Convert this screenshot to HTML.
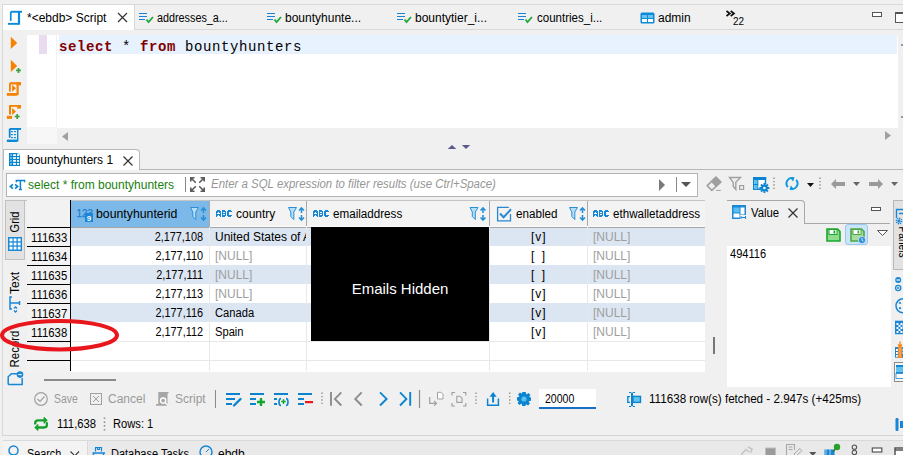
<!DOCTYPE html>
<html><head><meta charset="utf-8">
<style>
*{margin:0;padding:0;box-sizing:border-box}
html,body{width:903px;height:455px;overflow:hidden;background:#f0f0f0;font-family:"Liberation Sans",sans-serif;font-size:12px;color:#000}
.a{position:absolute}
.t{position:absolute;white-space:nowrap;line-height:14px}
svg{position:absolute;overflow:visible}
.g{color:#9e9e9e}
.r{text-align:right}
.sx{transform-origin:0 0}
.sr{transform-origin:100% 0}
</style></head><body>
<!-- ===== top tab bar ===== -->
<div class="a" style="left:2px;top:4px;width:901px;height:1px;background:#d9d9d9"></div>
<div class="a" style="left:2px;top:4px;width:1px;height:432px;background:#d9d9d9"></div>
<div class="a" style="left:3px;top:29px;width:900px;height:1px;background:#d9d9d9"></div>
<div class="a" style="left:3px;top:5px;width:131px;height:25px;background:#fff"></div>
<div class="a" style="left:134px;top:5px;width:1px;height:24px;background:#d9d9d9"></div>
<svg style="left:0;top:0" width="30" height="30"><g fill="#0a8ad8"><rect x="11" y="10.8" width="11" height="1.9"/><rect x="9.9" y="11.6" width="1.7" height="9.3"/><rect x="17.9" y="11.6" width="2.2" height="13"/><rect x="8" y="22.9" width="11" height="1.9"/></g></svg>
<div class="t" style="left:27px;top:11px">*&lt;ebdb&gt; Script</div>
<svg style="left:117px;top:12px" width="11" height="11"><path d="M1 1L10 10M10 1L1 10" stroke="#333" stroke-width="1.2"/></svg>

<svg style="left:139px;top:12px" width="16" height="12"><path d="M0 1.5H8M0 4.5H8M0 7.5H6" stroke="#1a82d4" stroke-width="1"/><path d="M7.5 7.5L9.5 10L14 5" fill="none" stroke="#1fa83a" stroke-width="1.8"/></svg>
<div class="t sx" style="left:157px;top:11px;transform:scaleX(.9)">addresses_a...</div>
<svg style="left:267px;top:12px" width="16" height="12"><path d="M0 1.5H8M0 4.5H8M0 7.5H6" stroke="#1a82d4" stroke-width="1"/><path d="M7.5 7.5L9.5 10L14 5" fill="none" stroke="#1fa83a" stroke-width="1.8"/></svg>
<div class="t" style="left:285px;top:11px">bountyhunte...</div>
<svg style="left:397px;top:12px" width="16" height="12"><path d="M0 1.5H8M0 4.5H8M0 7.5H6" stroke="#1a82d4" stroke-width="1"/><path d="M7.5 7.5L9.5 10L14 5" fill="none" stroke="#1fa83a" stroke-width="1.8"/></svg>
<div class="t" style="left:415px;top:11px">bountytier_i...</div>
<svg style="left:518px;top:12px" width="16" height="12"><path d="M0 1.5H8M0 4.5H8M0 7.5H6" stroke="#1a82d4" stroke-width="1"/><path d="M7.5 7.5L9.5 10L14 5" fill="none" stroke="#1fa83a" stroke-width="1.8"/></svg>
<div class="t sx" style="left:537px;top:11px;transform:scaleX(.96)">countries_i...</div>
<svg style="left:640px;top:12px" width="15" height="12"><rect x="0.5" y="0.5" width="14" height="11" rx="1.5" fill="#0a8ad8"/><rect x="2" y="3" width="5" height="3" fill="#6cc3f0"/><rect x="8" y="3" width="5" height="3" fill="#6cc3f0"/><rect x="2" y="7" width="5" height="3" fill="#fff"/><rect x="8" y="7" width="5" height="3" fill="#fff"/></svg>
<div class="t" style="left:658px;top:11px">admin</div>
<svg style="left:0;top:0" width="740" height="20"><path d="M726.5 11L729.8 13.5L726.5 16M730.7 11L734 13.5L730.7 16" fill="none" stroke="#111" stroke-width="1.7"/></svg>
<div class="t sx" style="left:733px;top:14px;font-size:11px;transform:scaleX(.9)">22</div>
<div class="a" style="left:872px;top:12px;width:10px;height:5px;border:1.5px solid #555;background:#fff"></div>
<div class="a" style="left:895px;top:12px;width:12px;height:10.5px;border:1.5px solid #555;border-top-width:2.5px;background:#fff"></div>

<!-- ===== editor ===== -->
<div class="a" style="left:27px;top:35px;width:871px;height:93px;background:#fff"></div>
<div class="a" style="left:56px;top:35px;width:1px;height:92px;background:#f2f2f2"></div>
<div class="a" style="left:39px;top:35px;width:8px;height:19px;background:#e8dcee"></div>
<div class="a" style="left:59px;top:35px;width:838px;height:19px;background:#e8f2fe"></div>
<div class="a" style="left:901px;top:44px;width:2px;height:2px;background:#999"></div><div class="a" style="left:901px;top:116px;width:2px;height:2px;background:#999"></div>
<div class="t" style="left:59px;top:40px;font-family:'Liberation Mono',monospace;font-size:14px;letter-spacing:0.6px;line-height:14px"><b style="color:#800000">select</b> * <b style="color:#800000">from</b> bountyhunters</div>
<div class="a" style="left:27px;top:127px;width:30px;height:17px;background:#f7f7f7"></div>
<svg style="left:62px;top:132px" width="8" height="9"><path d="M6 0V9L0 4.5Z" fill="#a0a0a0"/></svg>
<svg style="left:885px;top:131px" width="8" height="9"><path d="M0 0V9L6 4.5Z" fill="#a0a0a0"/></svg>
<!-- gutter icons -->
<svg style="left:0;top:0" width="27" height="145">
<path d="M10.8 36.7L17.2 42.9L10.8 49Z" fill="#f58200"/>
<path d="M10.8 59.7L17.2 65.9L10.8 72Z" fill="#f58200"/><path d="M16.1 70.4H20.9M18.5 67.9V72.9" stroke="#3d9f3d" stroke-width="1.7"/>
<g fill="#f58200"><rect x="9.7" y="82.2" width="11" height="2.3"/><rect x="18.5" y="82.2" width="2.4" height="3.2"/><rect x="9" y="83.3" width="1.8" height="8.3"/><rect x="16.5" y="82.2" width="2.2" height="13"/><rect x="6.9" y="93" width="10" height="2.8"/><path d="M12.1 84.8L16 88.3L12.1 91.8Z"/></g>
<g fill="#f58200"><rect x="9.7" y="105" width="11.2" height="1.8"/><rect x="17.2" y="105" width="3.7" height="3.6"/><rect x="9" y="105.3" width="2" height="9.2"/><rect x="6.9" y="115.8" width="5.2" height="3.1"/><path d="M12.1 107.9L16 111.5L12.1 115Z"/></g><path d="M14.7 116.5H19.7M17.2 114V119" stroke="#3d9f3d" stroke-width="1.7"/>
<g fill="#0a8ad8"><rect x="9.7" y="128" width="11.4" height="1.9"/><rect x="8.8" y="128.8" width="1.8" height="8.8"/><rect x="17" y="129.5" width="1.4" height="12"/><rect x="6.9" y="139.6" width="10.3" height="2.4"/><rect x="11" y="131" width="1.8" height="1.2"/><rect x="13.9" y="131" width="2" height="1.2"/><rect x="11" y="134" width="1.8" height="1.2"/><rect x="13.9" y="134" width="2" height="1.2"/><rect x="11" y="137" width="1.8" height="1.2"/><rect x="13.9" y="137" width="2" height="1.2"/></g>
</svg>
<svg style="left:447px;top:144px" width="26" height="6"><path d="M0.7 5L5 1L9.3 5Z" fill="#5a5a8c"/><path d="M14.9 1H23.2L19 5Z" fill="#5a5a8c"/></svg>

<!-- ===== results tab ===== -->
<div class="a" style="left:3px;top:169px;width:900px;height:1px;background:#b8b8b8"></div>
<div class="a" style="left:3px;top:149px;width:137px;height:21px;background:#fff;border:1px solid #b8b8b8;border-bottom:none;border-radius:0 4px 0 0"></div>
<svg style="left:0;top:0" width="30" height="170"><path d="M9 153H18L20 155V166H9Z" fill="#0a84d0"/><rect x="10" y="154.2" width="2" height="1.8" fill="#5ec4ee"/><rect x="13.1" y="154.2" width="2.8" height="1.8" fill="#fff"/><rect x="17" y="154.2" width="2.1" height="1.8" fill="#fff"/><rect x="10" y="157.1" width="2" height="1.8" fill="#5ec4ee"/><rect x="13.1" y="157.1" width="2.8" height="1.8" fill="#fff"/><rect x="17" y="157.1" width="2.1" height="1.8" fill="#fff"/><rect x="10" y="160.0" width="2" height="1.8" fill="#5ec4ee"/><rect x="13.1" y="160.0" width="2.8" height="1.8" fill="#fff"/><rect x="17" y="160.0" width="2.1" height="1.8" fill="#fff"/><rect x="10" y="163.0" width="2" height="1.8" fill="#5ec4ee"/><rect x="13.1" y="163.0" width="2.8" height="1.8" fill="#fff"/><rect x="17" y="163.0" width="2.1" height="1.8" fill="#fff"/><path d="M17.6 153.4L19.6 155.4" stroke="#fff" stroke-width="0.8"/></svg>
<div class="t" style="left:27px;top:153px">bountyhunters 1</div>
<svg style="left:123px;top:156px" width="10" height="10"><path d="M0.5 0.5L9.5 9.5M9.5 0.5L0.5 9.5" stroke="#333" stroke-width="1.2"/></svg>

<!-- ===== filter bar ===== -->
<div class="a" style="left:6px;top:173px;width:692px;height:24px;background:#fff;border:1px solid #b4b4b4"></div>
<svg style="left:0;top:0" width="30" height="195"><path d="M12.9 184.3L10.4 186.5L12.9 188.7M15.1 184.3L17.6 186.5L15.1 188.7" fill="none" stroke="#0a84d0" stroke-width="1.7"/><path d="M16.4 182.2V180.6H24.6V182.2M20.4 180.6V189.5M18.9 189.5H21.9" fill="none" stroke="#0a84d0" stroke-width="1.5"/></svg>
<div class="t" style="left:28px;top:178px;color:#208010">select * from bountyhunters</div>
<div class="a" style="left:185px;top:177px;width:1px;height:15px;background:#888"></div>
<svg style="left:190px;top:177px" width="16" height="16"><path d="M0.8 4.5V0.8H4.5M0.8 0.8L5.8 5.8M14.2 4.5V0.8H10.5M14.2 0.8L9.2 5.8M0.8 10.5V14.2H4.5M0.8 14.2L5.8 9.2M14.2 10.5V14.2H10.5M14.2 14.2L9.2 9.2" fill="none" stroke="#5c5c5c" stroke-width="1.6"/></svg>
<div class="t sx" style="left:211px;top:177px;color:#969696;font-style:italic;transform:scaleX(.953)">Enter a SQL expression to filter results (use Ctrl+Space)</div>
<svg style="left:659px;top:179px" width="8" height="13"><path d="M0 0L6 6L0 12Z" fill="#7a7a7a"/></svg>
<div class="a" style="left:676px;top:177px;width:1px;height:15px;background:#8a8a8a"></div>
<svg style="left:681px;top:182px" width="11" height="6"><path d="M0 0H10L5 5Z" fill="#555"/></svg>
<!-- toolbar right -->
<svg style="left:700px;top:170px" width="203" height="27">
<g transform="translate(-700,-170)">
<path d="M716 177.2L720.8 182L711.8 190.4L707.2 185.7Z" fill="none" stroke="#a0a0a0" stroke-width="1.6" stroke-linejoin="round"/><path d="M716 177.2L720.8 182L716.2 186.4L711.5 181.6Z" fill="#a0a0a0" stroke="#a0a0a0" stroke-width="1.2" stroke-linejoin="round"/><path d="M716.2 190.4H720.8" stroke="#a0a0a0" stroke-width="1"/>
<path d="M729.5 177.5H740.5L735.8 182.2V189.5L733.2 186.3V182.2Z" fill="none" stroke="#a0a0a0" stroke-width="1.4"/><rect x="739.6" y="185.6" width="4" height="3.8" fill="none" stroke="#a0a0a0" stroke-width="1.2"/>
<rect x="753.7" y="177.7" width="11.8" height="11.6" fill="#fff" stroke="#0a84d0" stroke-width="1.4"/><rect x="753" y="177" width="13.1" height="3" fill="#0a84d0"/><rect x="754.4" y="180" width="3.2" height="9.2" fill="#5cc0ee"/><path d="M757.8 180V189M754 184.5H757.8" stroke="#0a84d0" stroke-width="1"/>
<g transform="translate(764.4,188)"><circle r="3.6" fill="#0a84d0" stroke="#f0f0f0" stroke-width="0.6"/><path d="M0 -5V5M-5 0H5M-3.5 -3.5L3.5 3.5M3.5 -3.5L-3.5 3.5" stroke="#0a84d0" stroke-width="1.8"/><circle r="1.3" fill="#fff"/></g>
<g transform="translate(792,183.5) rotate(-40)"><path d="M-5.5 0A5.5 5.5 0 0 1 4.5 -3.2M5.5 0A5.5 5.5 0 0 1 -4.5 3.2" fill="none" stroke="#0a96e0" stroke-width="1.9"/><path d="M2.2 -5.8L6 -3.3L2.2 -0.8Z" fill="#0a96e0"/><path d="M-2.2 5.8L-6 3.3L-2.2 0.8Z" fill="#0a96e0"/></g>
</g>
<path d="M74 7.5V21" stroke="#9a8f80" stroke-width="1.4" stroke-dasharray="1.4 2"/>
<path d="M107 13H114L110.5 17Z" fill="#111"/>
<path d="M120 7.5V21" stroke="#9a8f80" stroke-width="1.4" stroke-dasharray="1.4 2"/>
<path d="M131 14L136 9V12H145V16H136V19Z" fill="#9a9a9a"/>
<path d="M153 12H160L156.5 16Z" fill="#666"/>
<path d="M183 14L178 9V12H169V16H178V19Z" fill="#9a9a9a"/>
<path d="M191 12H198L194.5 16Z" fill="#666"/>
</svg>

<!-- ===== grid ===== -->
<div class="a" style="left:27px;top:200px;width:678px;height:172px;background:#fff"></div>
<div class="a" style="left:25px;top:200px;width:680px;height:1px;background:#c4c4c4"></div>
<div class="a" style="left:27px;top:200px;width:44px;height:172px;background:#f2f2f2"></div>
<!-- header -->
<div class="a" style="left:71px;top:201px;width:139px;height:26px;background:#7cb9e8"></div>
<div class="a" style="left:210px;top:201px;width:495px;height:26px;background:#f3f3f3"></div>
<div class="a" style="left:209px;top:201px;width:1px;height:26px;background:#a8a8a8"></div><div class="a" style="left:306px;top:201px;width:1px;height:26px;background:#a8a8a8"></div>
<div class="a" style="left:489px;top:201px;width:1px;height:26px;background:#a8a8a8"></div>
<div class="a" style="left:587px;top:201px;width:1px;height:26px;background:#a8a8a8"></div>
<!-- data rows bg -->
<div class="a" style="left:71px;top:228px;width:634px;height:18px;background:#dce6f2"></div><div class="a" style="left:210px;top:226px;width:495px;height:1px;background:#fbfbfb"></div><div class="a" style="left:71px;top:227px;width:634px;height:1px;background:#a6a6a6"></div>
<div class="a" style="left:71px;top:265px;width:634px;height:19px;background:#dce6f2"></div>
<div class="a" style="left:71px;top:303px;width:634px;height:19px;background:#dce6f2"></div>
<!-- col lines in body -->
<div class="a" style="left:209px;top:227px;width:1px;height:144px;background:#e8e8e8"></div>
<div class="a" style="left:306px;top:227px;width:1px;height:144px;background:#e8e8e8"></div>
<div class="a" style="left:489px;top:227px;width:1px;height:144px;background:#e8e8e8"></div>
<div class="a" style="left:587px;top:227px;width:1px;height:144px;background:#e8e8e8"></div>
<div class="a" style="left:72px;top:341px;width:633px;height:1px;background:#e8e8e8"></div>
<div class="a" style="left:72px;top:360px;width:633px;height:1px;background:#e8e8e8"></div>
<!-- row number lines -->
<div class="a" style="left:70px;top:200px;width:1px;height:171px;background:#000"></div>
<div class="a" style="left:27px;top:227px;width:43px;height:1px;background:#000"></div>
<div class="a" style="left:27px;top:246px;width:43px;height:1px;background:#000"></div>
<div class="a" style="left:27px;top:265px;width:43px;height:1px;background:#000"></div>
<div class="a" style="left:27px;top:284px;width:43px;height:1px;background:#000"></div>
<div class="a" style="left:27px;top:303px;width:43px;height:1px;background:#000"></div>
<div class="a" style="left:27px;top:322px;width:43px;height:1px;background:#000"></div>
<div class="a" style="left:27px;top:341px;width:43px;height:1px;background:#000"></div>
<div class="a" style="left:27px;top:360px;width:43px;height:1px;background:#000"></div>
<!-- header texts -->
<svg style="left:76px;top:205px" width="18" height="18"><text x="0.5" y="12" font-family="Liberation Sans" font-size="10.5" fill="#1a7fd0" stroke="#1a7fd0" stroke-width="0.25" textLength="16.5" lengthAdjust="spacingAndGlyphs">123</text><rect x="9" y="8" width="8" height="9" fill="#1a86d6"/><text x="10.8" y="15.5" font-family="Liberation Sans" font-weight="bold" font-size="8" fill="#fff">9</text></svg>
<div class="t sx" style="left:96px;top:207px;transform:scaleX(1.025)">bountyhunterid</div>
<div class="t" style="left:236px;top:207px">country</div>
<div class="t sx" style="left:333px;top:207px;transform:scaleX(.97)">emailaddress</div>
<div class="t sx" style="left:516px;top:207px;transform:scaleX(.97)">enabled</div>
<div class="t sx" style="left:613px;top:207px;transform:scaleX(.967)">ethwalletaddress</div>
<svg style="left:0;top:200px" width="705" height="27">
<path d="M217 10h1v1h-1zM218 10h1v1h-1zM219 10h1v1h-1zM216 11h1v1h-1zM217 11h1v1h-1zM218 11h1v1h-1zM219 11h1v1h-1zM220 11h1v1h-1zM216 12h1v1h-1zM217 12h1v1h-1zM219 12h1v1h-1zM220 12h1v1h-1zM216 13h1v1h-1zM220 13h1v1h-1zM216 14h1v1h-1zM217 14h1v1h-1zM218 14h1v1h-1zM219 14h1v1h-1zM220 14h1v1h-1zM216 15h1v1h-1zM217 15h1v1h-1zM219 15h1v1h-1zM220 15h1v1h-1zM216 16h1v1h-1zM220 16h1v1h-1zM222 10h1v1h-1zM223 10h1v1h-1zM224 10h1v1h-1zM222 11h1v1h-1zM223 11h1v1h-1zM224 11h1v1h-1zM225 11h1v1h-1zM222 12h1v1h-1zM225 12h1v1h-1zM222 13h1v1h-1zM223 13h1v1h-1zM224 13h1v1h-1zM225 13h1v1h-1zM222 14h1v1h-1zM225 14h1v1h-1zM222 15h1v1h-1zM223 15h1v1h-1zM224 15h1v1h-1zM225 15h1v1h-1zM222 16h1v1h-1zM223 16h1v1h-1zM224 16h1v1h-1zM228 10h1v1h-1zM229 10h1v1h-1zM230 10h1v1h-1zM227 11h1v1h-1zM228 11h1v1h-1zM229 11h1v1h-1zM230 11h1v1h-1zM231 11h1v1h-1zM227 12h1v1h-1zM228 12h1v1h-1zM227 13h1v1h-1zM228 13h1v1h-1zM227 14h1v1h-1zM228 14h1v1h-1zM227 15h1v1h-1zM228 15h1v1h-1zM229 15h1v1h-1zM230 15h1v1h-1zM231 15h1v1h-1zM228 16h1v1h-1zM229 16h1v1h-1zM230 16h1v1h-1zM314 10h1v1h-1zM315 10h1v1h-1zM316 10h1v1h-1zM313 11h1v1h-1zM314 11h1v1h-1zM315 11h1v1h-1zM316 11h1v1h-1zM317 11h1v1h-1zM313 12h1v1h-1zM314 12h1v1h-1zM316 12h1v1h-1zM317 12h1v1h-1zM313 13h1v1h-1zM317 13h1v1h-1zM313 14h1v1h-1zM314 14h1v1h-1zM315 14h1v1h-1zM316 14h1v1h-1zM317 14h1v1h-1zM313 15h1v1h-1zM314 15h1v1h-1zM316 15h1v1h-1zM317 15h1v1h-1zM313 16h1v1h-1zM317 16h1v1h-1zM319 10h1v1h-1zM320 10h1v1h-1zM321 10h1v1h-1zM319 11h1v1h-1zM320 11h1v1h-1zM321 11h1v1h-1zM322 11h1v1h-1zM319 12h1v1h-1zM322 12h1v1h-1zM319 13h1v1h-1zM320 13h1v1h-1zM321 13h1v1h-1zM322 13h1v1h-1zM319 14h1v1h-1zM322 14h1v1h-1zM319 15h1v1h-1zM320 15h1v1h-1zM321 15h1v1h-1zM322 15h1v1h-1zM319 16h1v1h-1zM320 16h1v1h-1zM321 16h1v1h-1zM325 10h1v1h-1zM326 10h1v1h-1zM327 10h1v1h-1zM324 11h1v1h-1zM325 11h1v1h-1zM326 11h1v1h-1zM327 11h1v1h-1zM328 11h1v1h-1zM324 12h1v1h-1zM325 12h1v1h-1zM324 13h1v1h-1zM325 13h1v1h-1zM324 14h1v1h-1zM325 14h1v1h-1zM324 15h1v1h-1zM325 15h1v1h-1zM326 15h1v1h-1zM327 15h1v1h-1zM328 15h1v1h-1zM325 16h1v1h-1zM326 16h1v1h-1zM327 16h1v1h-1zM594 10h1v1h-1zM595 10h1v1h-1zM596 10h1v1h-1zM593 11h1v1h-1zM594 11h1v1h-1zM595 11h1v1h-1zM596 11h1v1h-1zM597 11h1v1h-1zM593 12h1v1h-1zM594 12h1v1h-1zM596 12h1v1h-1zM597 12h1v1h-1zM593 13h1v1h-1zM597 13h1v1h-1zM593 14h1v1h-1zM594 14h1v1h-1zM595 14h1v1h-1zM596 14h1v1h-1zM597 14h1v1h-1zM593 15h1v1h-1zM594 15h1v1h-1zM596 15h1v1h-1zM597 15h1v1h-1zM593 16h1v1h-1zM597 16h1v1h-1zM599 10h1v1h-1zM600 10h1v1h-1zM601 10h1v1h-1zM599 11h1v1h-1zM600 11h1v1h-1zM601 11h1v1h-1zM602 11h1v1h-1zM599 12h1v1h-1zM602 12h1v1h-1zM599 13h1v1h-1zM600 13h1v1h-1zM601 13h1v1h-1zM602 13h1v1h-1zM599 14h1v1h-1zM602 14h1v1h-1zM599 15h1v1h-1zM600 15h1v1h-1zM601 15h1v1h-1zM602 15h1v1h-1zM599 16h1v1h-1zM600 16h1v1h-1zM601 16h1v1h-1zM605 10h1v1h-1zM606 10h1v1h-1zM607 10h1v1h-1zM604 11h1v1h-1zM605 11h1v1h-1zM606 11h1v1h-1zM607 11h1v1h-1zM608 11h1v1h-1zM604 12h1v1h-1zM605 12h1v1h-1zM604 13h1v1h-1zM605 13h1v1h-1zM604 14h1v1h-1zM605 14h1v1h-1zM604 15h1v1h-1zM605 15h1v1h-1zM606 15h1v1h-1zM607 15h1v1h-1zM608 15h1v1h-1zM605 16h1v1h-1zM606 16h1v1h-1zM607 16h1v1h-1z" fill="#1a86d6"/>
<path d="M508.8 7.3H497.6V20.8H510.5V14" fill="none" stroke="#2b88d0" stroke-width="1.3"/><path d="M500 13.5L503.6 17.2L511 9.3" fill="none" stroke="#2b88d0" stroke-width="2"/>
<g transform="translate(190,7)"><path d="M0.5 0.5H8.5L5.8 5V12.5L2.8 9.5V5Z" fill="#b6def6" stroke="#2b8fd6" stroke-width="1"/><path d="M13.5 1V6M13.5 8V13M11 3.5L13.5 1L16 3.5M11 10.5L13.5 13L16 10.5" fill="none" stroke="#2b8fd6" stroke-width="1.6"/></g><g transform="translate(288,7)"><path d="M0.5 0.5H8.5L5.8 5V12.5L2.8 9.5V5Z" fill="#b6def6" stroke="#2b8fd6" stroke-width="1"/><path d="M13.5 1V6M13.5 8V13M11 3.5L13.5 1L16 3.5M11 10.5L13.5 13L16 10.5" fill="none" stroke="#2b8fd6" stroke-width="1.6"/></g><g transform="translate(469.5,7)"><path d="M0.5 0.5H8.5L5.8 5V12.5L2.8 9.5V5Z" fill="#b6def6" stroke="#2b8fd6" stroke-width="1"/><path d="M13.5 1V6M13.5 8V13M11 3.5L13.5 1L16 3.5M11 10.5L13.5 13L16 10.5" fill="none" stroke="#2b8fd6" stroke-width="1.6"/></g><g transform="translate(569,7)"><path d="M0.5 0.5H8.5L5.8 5V12.5L2.8 9.5V5Z" fill="#b6def6" stroke="#2b8fd6" stroke-width="1"/><path d="M13.5 1V6M13.5 8V13M11 3.5L13.5 1L16 3.5M11 10.5L13.5 13L16 10.5" fill="none" stroke="#2b8fd6" stroke-width="1.6"/></g>
</svg>
<!-- row data -->
<div class="t sx" style="left:31px;top:231px;transform:scaleX(.946)">111633</div>
<div class="t sx" style="left:31px;top:250px;transform:scaleX(.946)">111634</div>
<div class="t sx" style="left:31px;top:269px;transform:scaleX(.946)">111635</div>
<div class="t sx" style="left:31px;top:288px;transform:scaleX(.946)">111636</div>
<div class="t sx" style="left:31px;top:307px;transform:scaleX(.946)">111637</div>
<div class="t sx" style="left:31px;top:326px;transform:scaleX(.946)">111638</div>
<div class="t r sr" style="left:100px;width:103px;top:230px;transform:scaleX(.906)">2,177,108</div>
<div class="t r sr" style="left:100px;width:103px;top:249px;transform:scaleX(.906)">2,177,110</div>
<div class="t r sr" style="left:100px;width:103px;top:268px;transform:scaleX(.906)">2,177,111</div>
<div class="t r sr" style="left:100px;width:103px;top:287px;transform:scaleX(.906)">2,177,113</div>
<div class="t r sr" style="left:100px;width:103px;top:306px;transform:scaleX(.906)">2,177,116</div>
<div class="t r sr" style="left:100px;width:103px;top:325px;transform:scaleX(.906)">2,177,112</div>
<div class="t" style="left:215px;top:230px;width:91px;overflow:hidden">United States of America</div>
<div class="t g" style="left:215px;top:249px">[NULL]</div>
<div class="t g" style="left:215px;top:268px">[NULL]</div>
<div class="t g" style="left:215px;top:287px">[NULL]</div>
<div class="t sx" style="left:215px;top:306px;transform:scaleX(.93)">Canada</div>
<div class="t sx" style="left:215px;top:325px;transform:scaleX(.93)">Spain</div>
<div class="t" style="left:531px;top:230px;letter-spacing:1px">[v]</div>
<div class="t" style="left:531px;top:249px;word-spacing:4px">[ ]</div>
<div class="t" style="left:531px;top:268px;word-spacing:4px">[ ]</div>
<div class="t" style="left:531px;top:287px;letter-spacing:1px">[v]</div>
<div class="t" style="left:531px;top:306px;letter-spacing:1px">[v]</div>
<div class="t" style="left:531px;top:325px;letter-spacing:1px">[v]</div>
<div class="t g" style="left:593px;top:230px">[NULL]</div>
<div class="t g" style="left:593px;top:249px">[NULL]</div>
<div class="t g" style="left:593px;top:268px">[NULL]</div>
<div class="t g" style="left:593px;top:287px">[NULL]</div>
<div class="t g" style="left:593px;top:306px">[NULL]</div>
<div class="t g" style="left:593px;top:325px">[NULL]</div>
<!-- emails hidden box -->
<div class="a" style="left:311px;top:227px;width:178px;height:114px;background:#000"></div>
<div class="t" style="left:311px;width:178px;text-align:center;top:281px;color:#fff;font-size:15px;line-height:16px">Emails Hidden</div>

<!-- vertical tabs -->
<div class="a" style="left:5px;top:200px;width:20px;height:60px;background:#e2e2e2;border:1px solid #c0c0c0"></div>
<div class="t" style="left:14.5px;top:221.5px;transform:translate(-50%,-50%) rotate(-90deg) scaleX(.92)">Grid</div>
<svg style="left:8px;top:237px" width="15" height="15"><rect x="0" y="0" width="14" height="14" fill="#1a8ad8"/><g fill="#fff"><rect x="1.5" y="1.5" width="3" height="2.8"/><rect x="5.7" y="1.5" width="2.8" height="2.8"/><rect x="9.8" y="1.5" width="2.8" height="2.8"/><rect x="1.5" y="5.6" width="3" height="2.8"/><rect x="5.7" y="5.6" width="2.8" height="2.8"/><rect x="9.8" y="5.6" width="2.8" height="2.8"/><rect x="1.5" y="9.7" width="3" height="2.8"/><rect x="5.7" y="9.7" width="2.8" height="2.8"/><rect x="9.8" y="9.7" width="2.8" height="2.8"/></g></svg>
<div class="t" style="left:14.5px;top:282.5px;transform:translate(-50%,-50%) rotate(-90deg)">Text</div>
<svg style="left:8px;top:296px" width="15" height="18"><path d="M4 1H2V13H4M2.5 7H12M11.5 5V9" fill="none" stroke="#1a86d6" stroke-width="1.5"/><path d="M6 12.5L7.5 11L9 12.5M6 14.5L7.5 16L9 14.5" fill="none" stroke="#1a86d6" stroke-width="1.3"/></svg>
<div class="t" style="left:14.5px;top:349px;transform:translate(-50%,-50%) rotate(-90deg) scaleX(.95)">Record</div>
<svg style="left:7px;top:371px" width="17" height="15"><path d="M1.2 13.6V5.8L4.5 2.8H10M15.2 7V13.6H1.2" fill="none" stroke="#1a86d6" stroke-width="1.5"/><circle cx="13" cy="3.6" r="3.3" fill="#1a86d6"/><path d="M11.3 3.6H14.7" stroke="#fff" stroke-width="1.1"/></svg>

<!-- red ellipse -->
<svg style="left:0;top:0" width="130" height="360"><ellipse cx="59.5" cy="335.2" rx="57.5" ry="14.3" fill="none" stroke="#e8171e" stroke-width="4"/></svg>

<!-- grid scrollbars -->
<div class="a" style="left:44px;top:379px;width:72px;height:2px;background:#8a8a8a"></div>
<div class="a" style="left:713px;top:337px;width:2px;height:17px;background:#777"></div>

<!-- ===== value panel ===== -->
<div class="a" style="left:804px;top:223px;width:86px;height:1px;background:#a8a8a8"></div>
<div class="a" style="left:727px;top:200px;width:78px;height:24px;border-top:1px solid #a8a8a8;border-right:1px solid #a8a8a8;border-radius:0 4px 0 0"></div>
<svg style="left:732px;top:205px" width="15" height="15"><rect x="0" y="0" width="14" height="14" fill="#1a8ad8"/><rect x="1.5" y="2.5" width="6" height="5" fill="#5cbdee"/><rect x="1.5" y="8.5" width="6" height="4" fill="#fff"/><rect x="8.5" y="2.5" width="4" height="7" fill="#fff"/><rect x="8" y="10" width="6" height="4" fill="#f0f0f0"/><path d="M9 11V14M13.5 11V14M9 12.5H13.5" stroke="#1a8ad8" stroke-width="1"/></svg>
<div class="t sx" style="left:751px;top:206px;transform:scaleX(.94)">Value</div>
<svg style="left:788px;top:208px" width="10" height="10"><path d="M0.5 0.5L9.5 9.5M9.5 0.5L0.5 9.5" stroke="#333" stroke-width="1.2"/></svg>
<div class="a" style="left:871px;top:207px;width:10px;height:4px;border:1.2px solid #555;background:#fff"></div>
<svg style="left:826px;top:228px" width="16" height="16"><path d="M1 1H11.5L14 3.5V13H1Z" fill="#8fdc8f" stroke="#1aa82c" stroke-width="1.6"/><rect x="3" y="1.5" width="8" height="5" fill="#fff" stroke="#1aa82c" stroke-width="1"/><rect x="7.5" y="2.5" width="1.8" height="3" fill="#1aa82c"/></svg>
<div class="a" style="left:845px;top:224px;width:23px;height:21px;background:#cce4f7;border:1px solid #99c9ef;border-radius:3px"></div>
<svg style="left:850px;top:228px" width="18" height="17"><path d="M1 1H11.5L14 3.5V13H1Z" fill="#a8dc98" stroke="#4aa84a" stroke-width="1.6"/><rect x="3" y="1.5" width="8" height="5" fill="#fff" stroke="#4aa84a" stroke-width="1"/><rect x="7.5" y="2.5" width="1.8" height="3" fill="#4aa84a"/><circle cx="12" cy="12" r="3.6" fill="#2f8fd8" stroke="#cce4f7" stroke-width="0.8"/><path d="M12 10V12.3L13.3 13" stroke="#fff" stroke-width="0.8" fill="none"/></svg>
<svg style="left:877px;top:230px" width="12" height="8"><path d="M0.5 0.5H10.5L5.5 5.5Z" fill="#fff" stroke="#555"/></svg>
<div class="a" style="left:727px;top:246px;width:164px;height:141px;background:#fff"></div>
<div class="t sx" style="left:730px;top:247px;transform:scaleX(.92)">494116</div>
<!-- right panels strip -->
<div class="a" style="left:893px;top:200px;width:12px;height:70px;background:#e2e2e2;border:1px solid #b8b8b8"></div>
<div class="t" style="left:903px;top:242px;transform:translate(-50%,-50%) rotate(90deg) scaleX(.85)">Panels</div>
<svg style="left:896px;top:209px" width="9" height="16"><path d="M0.5 9V0.5H9M3 4.5H9" fill="none" stroke="#1a86d6" stroke-width="1.4"/><circle cx="3" cy="12" r="2.6" fill="none" stroke="#1a86d6" stroke-width="1.6" stroke-dasharray="1.2 0.8"/><circle cx="3" cy="12" r="1.5" fill="#1a86d6"/></svg>
<svg style="left:0;top:0" width="903" height="390">
<circle cx="898.2" cy="280" r="3" fill="#1a86d6"/><path d="M896.5 280H900" stroke="#fff" stroke-width="1.2"/>
<circle cx="898.2" cy="288" r="2.6" fill="#fff" stroke="#1a86d6" stroke-width="1.3"/><path d="M896.8 286.6L899.6 289.4M899.6 286.6L896.8 289.4" stroke="#1a86d6" stroke-width="1"/>
<circle cx="903" cy="305.8" r="7" fill="none" stroke="#1a86d6" stroke-width="1.5"/><circle cx="900" cy="303" r="1.1" fill="#1a86d6"/><circle cx="900" cy="308.2" r="1.1" fill="#1a86d6"/>
<rect x="895" y="320.7" width="9" height="13.5" fill="#1a86d6"/><g fill="#fff"><rect x="896.5" y="323" width="2" height="2"/><rect x="900.5" y="323" width="2" height="2"/><rect x="898.5" y="325" width="2" height="2"/><rect x="902.5" y="325" width="2" height="2"/><rect x="896.5" y="327" width="2" height="2"/><rect x="900.5" y="327" width="2" height="2"/><rect x="898.5" y="329" width="2" height="2"/><rect x="896.5" y="331" width="2" height="2"/><rect x="900.5" y="331" width="2" height="2"/></g>
<path d="M900 341.5V346.5M898 344.5L900 346.5L902 344.5" fill="none" stroke="#f5820f" stroke-width="1.3"/>
<rect x="895" y="347" width="9" height="10.6" fill="#1a86d6"/><g fill="#fff"><rect x="896" y="349" width="2" height="2"/><rect x="896" y="352" width="2" height="2"/><rect x="896" y="355" width="2" height="1.8"/></g><rect x="898.2" y="347" width="3.6" height="10.6" fill="#f5a050" stroke="#f5820f" stroke-width="0.8"/><rect x="902.5" y="349" width="2" height="2" fill="#fff"/><rect x="902.5" y="352" width="2" height="2" fill="#fff"/>
<rect x="894.5" y="362.5" width="10" height="19" fill="#f7f7f7" stroke="#8c8c8c"/><rect x="896" y="365" width="8" height="2" fill="#1a86d6"/><rect x="896" y="367" width="8" height="5" fill="#5ec4ee"/><rect x="896" y="372" width="8" height="1.5" fill="#1a86d6"/><rect x="896" y="373.5" width="8" height="5" fill="#fff" stroke="#1a86d6" stroke-width="0.8"/>
</svg>

<!-- ===== bottom toolbar ===== -->
<svg style="left:34px;top:392px" width="15" height="15"><circle cx="7" cy="7" r="6.3" fill="none" stroke="#a0a0a0" stroke-width="1.2"/><path d="M3.5 7L6 9.5L10.5 4.5" fill="none" stroke="#a0a0a0" stroke-width="1.2"/></svg>
<div class="t sx" style="left:54px;top:392px;color:#999;transform:scaleX(.865)">Save</div>
<svg style="left:90px;top:393px" width="13" height="13"><rect x="0.5" y="0.5" width="11" height="11" fill="none" stroke="#a0a0a0"/><path d="M3 3L9 9M9 3L3 9" stroke="#a0a0a0"/></svg>
<div class="t" style="left:108px;top:392px;color:#999">Cancel</div>
<svg style="left:0;top:0" width="180" height="410"><path d="M158.3 392.1H169L167.5 394V404H167V405.7H156V404H158.3Z" fill="#a6a6a6"/><circle cx="163.1" cy="400.6" r="2.6" fill="#a6a6a6" stroke="#fff" stroke-width="1.4"/><path d="M165 402.5L167 404.5" stroke="#fff" stroke-width="1.4"/></svg>
<div class="t" style="left:175px;top:392px;color:#999">Script</div>
<div class="a" style="left:215px;top:390px;width:1px;height:18px;background:#8a8a8a"></div>
<svg style="left:0;top:0" width="540" height="412">
<g fill="#0a84d0">
<rect x="226" y="393" width="14" height="2"/><rect x="226" y="398" width="9" height="2"/><rect x="226" y="403" width="6" height="2"/>
<rect x="250" y="393" width="14" height="2"/><rect x="250" y="398" width="6" height="2"/><rect x="250" y="403" width="6" height="2"/>
<rect x="274" y="393" width="14" height="2"/><rect x="274" y="398" width="3" height="2"/><rect x="274" y="403" width="3" height="2"/>
<rect x="298" y="393" width="14" height="2"/><rect x="298" y="398" width="6" height="2"/><rect x="298" y="403" width="6" height="2"/>
</g>
<path d="M234 405.5L240.5 399" stroke="#0a84d0" stroke-width="2.4" stroke-linecap="round"/>
<path d="M257 402H265M261 398V406" stroke="#10a830" stroke-width="2.4"/>
<path d="M281 398.5Q279 398.5 279 402T281 405.5M286 398.5Q288 398.5 288 402T286 405.5" fill="none" stroke="#0a84d0" stroke-width="1.6"/>
<path d="M281.2 401.6H285.8M283.5 399.3V403.9" stroke="#10a830" stroke-width="1.5"/>
<rect x="305" y="401" width="8" height="2.2" fill="#f01818"/>
<path d="M322 392.5V406" stroke="#9a8f80" stroke-width="1.4" stroke-dasharray="1.4 2"/>
<g fill="none" stroke-width="1.9">
<path d="M331 392V405.7M341.3 392.4L334.9 398.9L341.3 405.5" stroke="#8c8c8c"/>
<path d="M361.7 392.4L355.3 398.9L361.7 405.5" stroke="#8c8c8c"/>
<path d="M380 392.4L386.6 398.9L380 405.5" stroke="#0a84d0"/>
<path d="M400 392.4L406.4 398.9L400 405.5M410.2 392V405.7" stroke="#0a84d0"/>
</g>
<path d="M419.5 390V408" stroke="#8a8a8a" stroke-width="1.2"/>
<path d="M429.7 397V403.3H436.5M434 400.8L436.5 403.3L434 405.8" fill="none" stroke="#a0a0a0" stroke-width="1.2"/><path d="M437.5 392.3H441L443 394.3V399H437.5Z" fill="#fff" stroke="#a0a0a0" stroke-width="1"/>
<path d="M452 395.5V392.5H455M463 392.5H465.8V395.5M452 403V406H455M463 406H465.8V403" fill="none" stroke="#a0a0a0" stroke-width="1.2"/><path d="M456.8 396.2H460L462 398.2V402.4H456.8Z" fill="none" stroke="#a0a0a0" stroke-width="1.1"/>
<path d="M476 392.5V406" stroke="#9a8f80" stroke-width="1.4" stroke-dasharray="1.4 2"/>
<path d="M487.6 398.5V405.3H498.4V398.5" fill="none" stroke="#0a84d0" stroke-width="1.5"/><path d="M493.1 396V402.5" stroke="#0a84d0" stroke-width="2"/><path d="M489.6 396.8L493.1 392L496.6 396.8Z" fill="#0a84d0"/>
<path d="M509.7 392.5V406" stroke="#9a8f80" stroke-width="1.4" stroke-dasharray="1.4 2"/>
<g transform="translate(524,399)"><path d="M-1.8 -7H1.8L2.3 -4.6L4.6 -5.9L6.4 -4.1L5.2 -1.9L7 -1.4V1.8L4.6 2.3L5.9 4.6L4.1 6.4L1.9 5.2L1.4 7H-1.8L-2.3 4.6L-4.6 5.9L-6.4 4.1L-5.2 1.9L-7 1.4V-1.8L-4.6 -2.3L-5.9 -4.6L-4.1 -6.4L-1.9 -5.2Z" fill="#0a84d0"/><circle r="2.6" fill="#5cc0ee"/></g>
</svg>
<div class="a" style="left:539px;top:389px;width:57px;height:20px;background:#fff;border-bottom:2px solid #1a6fc4"></div>
<div class="t sx" style="left:545px;top:392px;transform:scaleX(.88)">20000</div>
<svg style="left:0;top:0" width="650" height="410"><rect x="632.9" y="396.4" width="7.6" height="6" fill="#5ec4ee" stroke="#0a84d0" stroke-width="1.4"/><path d="M630 396.6H627.8V402.4H630" fill="none" stroke="#0a84d0" stroke-width="1.4"/><rect x="631" y="392.6" width="2" height="13.6" fill="#0a84d0"/><path d="M629 392.5H631M633 392.5H635M629 406.5H631M633 406.5H635" stroke="#0a84d0" stroke-width="1"/></svg>
<div class="t sx" style="left:649px;top:392px;transform:scaleX(.97)">111638 row(s) fetched - 2.947s (+425ms)</div>
<svg style="left:0;top:0" width="60" height="440"><path d="M35.2 424.6V423Q35.2 420.3 38 420.3H44.5M46.9 422.2V424.8Q46.9 427.5 44 427.5H37.5" fill="none" stroke="#14a02c" stroke-width="2.3"/><path d="M44 417.2L47.3 420.3L44 423.4Z" fill="#14a02c" stroke="#14a02c" stroke-width="0.8"/><path d="M38 424.4L34.7 427.5L38 430.6Z" fill="#14a02c" stroke="#14a02c" stroke-width="0.8"/></svg>
<div class="t sx" style="left:57px;top:417px;transform:scaleX(.94)">111,638</div>
<svg style="left:0;top:0" width="110" height="435"><path d="M104.5 417.5V431" stroke="#a09584" stroke-width="1.6" stroke-dasharray="1.6 2.2"/></svg>
<div class="t sx" style="left:113px;top:417px;transform:scaleX(.93)">Rows: 1</div>
<svg style="left:895px;top:418px" width="8" height="14"><rect x="0.5" y="0" width="3" height="13" rx="1.2" fill="#1a86d6"/><rect x="5" y="3" width="4" height="7" fill="#1a86d6"/></svg>

<!-- panel bottom border and bottom tabs -->
<div class="a" style="left:2px;top:435px;width:901px;height:1px;background:#d4d4d4"></div>
<div class="a" style="left:3px;top:440px;width:900px;height:1px;background:#d9d9d9"></div>
<div class="a" style="left:88px;top:441px;width:815px;height:14px;background:#e9e9e9"></div><div class="a" style="left:3px;top:441px;width:84px;height:14px;background:#f3f3f3"></div>
<div class="a" style="left:87px;top:441px;width:1px;height:14px;background:#d9d9d9"></div>
<svg style="left:8px;top:445px" width="12" height="12"><circle cx="5.5" cy="5.5" r="4.5" fill="none" stroke="#1a86d6" stroke-width="1.5"/></svg>
<div class="t sx" style="left:27px;top:447px;transform:scaleX(.9)">Search</div>
<svg style="left:70px;top:451px" width="11" height="7"><path d="M0.5 0.5L4.8 4.8L9 0.5" fill="none" stroke="#333" stroke-width="1.1"/></svg>
<svg style="left:92px;top:446px" width="14" height="11"><path d="M3.5 5.5V1.5H9.5V5.5M5.5 1.5V3.5H7.5V1.5" fill="none" stroke="#1a86d6" stroke-width="1.2"/><path d="M0.5 7H13M1.5 7V10M11.5 7V10" fill="none" stroke="#1a86d6" stroke-width="1.4"/></svg>
<div class="t sx" style="left:111px;top:447px;transform:scaleX(.917)">Database Tasks</div>
<svg style="left:199px;top:445px" width="14" height="12"><circle cx="7" cy="7" r="6" fill="none" stroke="#1a86d6" stroke-width="1.5"/><path d="M7 7L10 4" stroke="#1a86d6"/></svg>
<div class="t" style="left:218px;top:447px">ebdb</div>
<svg style="left:0;top:0" width="903" height="455">
<path d="M741 455L746 449.5L749 452M748 447L752 449L750.5 453" fill="none" stroke="#c4c4c4" stroke-width="1.5"/>
<rect x="765.5" y="448" width="10" height="8" fill="#9a9a9a" stroke="#bdbdbd"/>
<path d="M786.5 455V444.5H794.5V450" fill="none" stroke="#a8a8a8" stroke-width="1.1"/><path d="M788.5 447H792.5M788.5 449.5H792.5" stroke="#a8a8a8"/><path d="M794 454L800 448.5L802 450.5L796 456Z" fill="none" stroke="#a8a8a8"/>
<path d="M809.2 452H816.4L812.8 456Z" fill="#555"/>
<rect x="824.5" y="449.5" width="10" height="6" fill="#1a86d6"/><path d="M826 449.5V455M830 449.5V455" stroke="#fff" stroke-width="0.6"/><path d="M833 452L836 448" stroke="#2a7a2a" stroke-width="1.3"/><circle cx="837" cy="447" r="3.2" fill="#2aa02a"/>
<circle cx="854.4" cy="447.2" r="2.2" fill="none" stroke="#555" stroke-width="1.1"/><circle cx="854.4" cy="452.4" r="2.2" fill="none" stroke="#555" stroke-width="1.1"/>
<rect x="872.3" y="448" width="9.5" height="4" fill="#fff" stroke="#555" stroke-width="1.2"/>
<rect x="895" y="448" width="12" height="10" fill="#fff" stroke="#555" stroke-width="1.5"/><path d="M895 450H907" stroke="#555" stroke-width="1.5"/>
</svg>
</body></html>
